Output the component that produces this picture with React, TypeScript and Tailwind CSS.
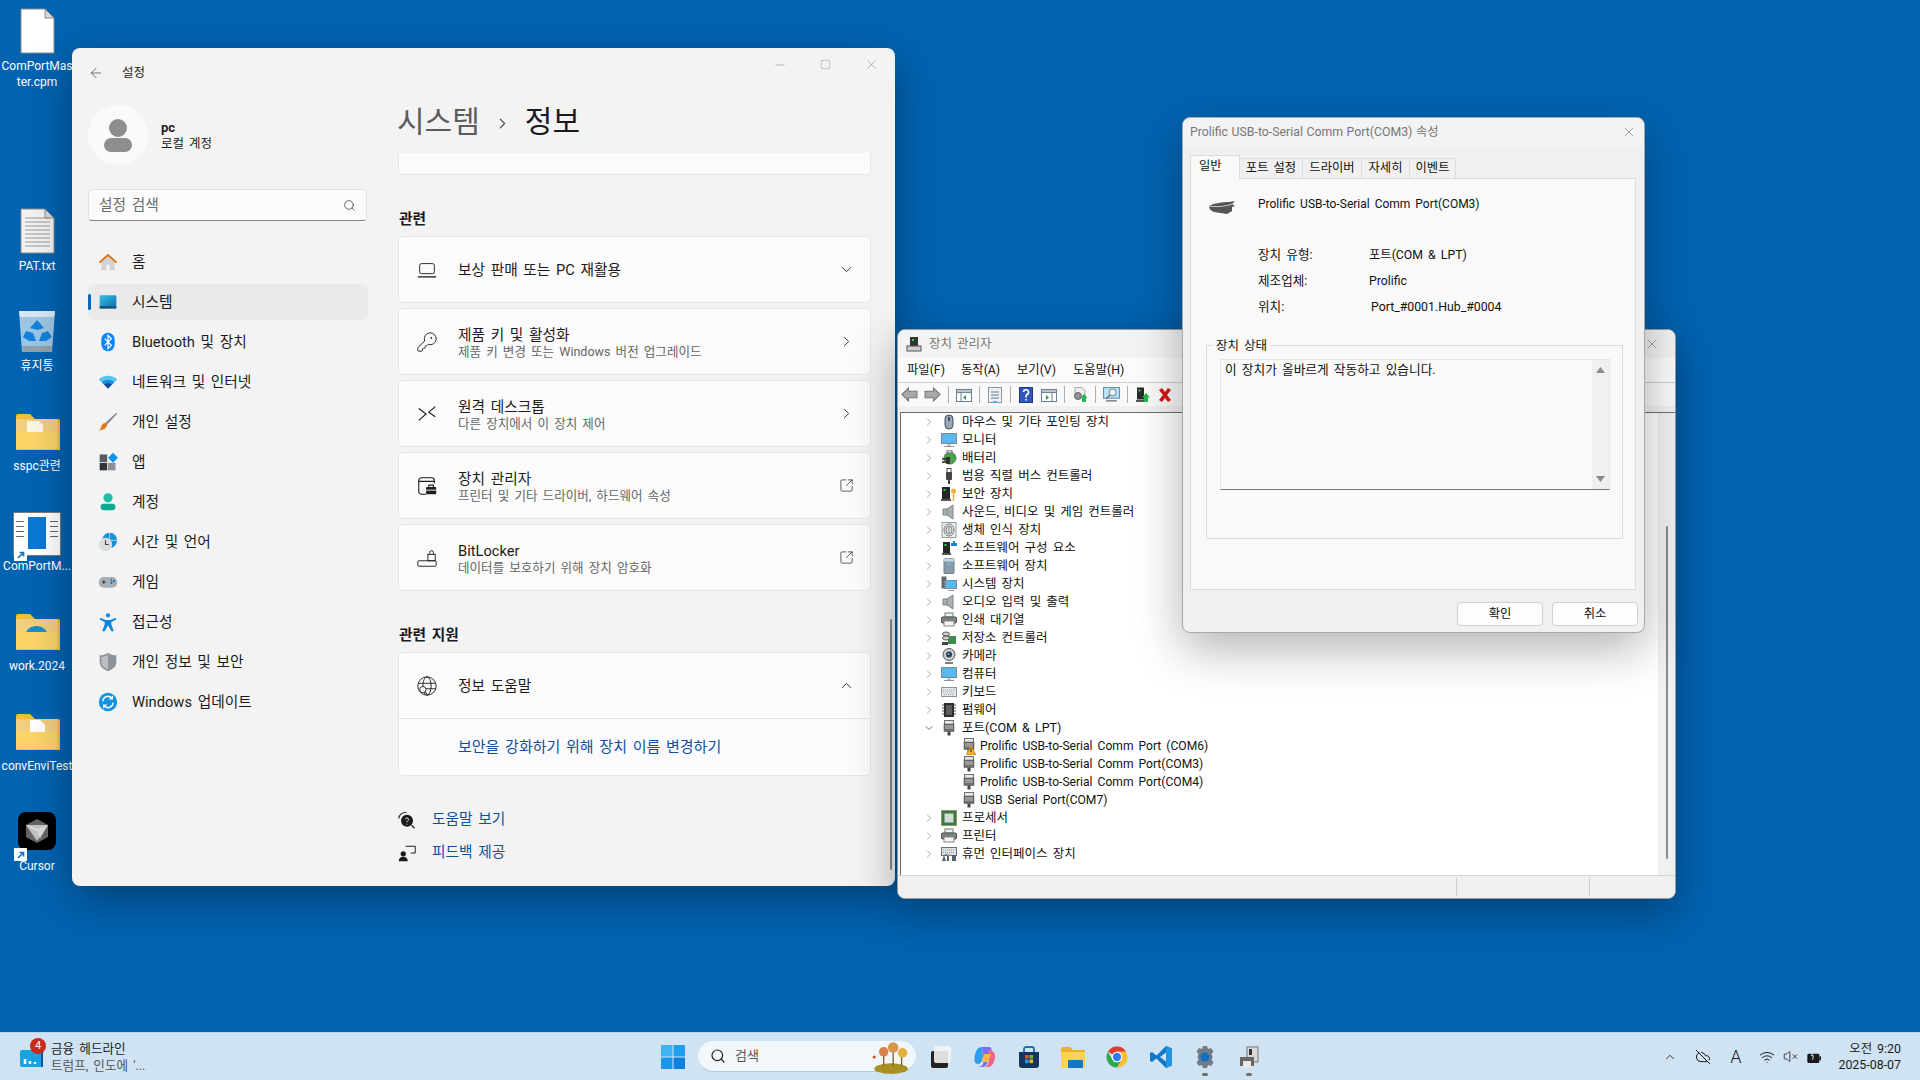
import { ReactNode } from 'react'
import { ChevronDown, ChevronRight, ChevronUp, ChevronUp as Caret, Search, SquareArrowOutUpRight, ArrowLeft, Minus, Square, X, KeyRound, Wifi, VolumeX, CloudOff } from 'lucide-react'

const FONT = "font-['Roboto','Noto_Sans_CJK_KR',sans-serif]"

function Ico({ size = 20, box = 24, children, className }: { size?: number; box?: number; children: ReactNode; className?: string }) {
	return (
		<svg width={size} height={size} viewBox={`0 0 ${box} ${box}`} className={`shrink-0 ${className ?? ''}`}>
			{children}
		</svg>
	)
}

// ---- desktop
function FileIcon({ lines }: { lines?: boolean }) {
	return (
		<Ico size={46} box={46}>
			<path d="M7 1h24l9 9v35H7z" fill={lines ? '#f2f2f2' : '#fff'} stroke="#8c8c8c" />
			<path d="M31 1v9h9z" fill="#d9d9d9" stroke="#8c8c8c" />
			{lines &&
				[10, 14, 18, 22, 26, 30, 34, 38].map((y) => <path key={y} d={`M11 ${y}h25`} stroke="#9a9a9a" />)}
		</Ico>
	)
}

function FolderIcon({ inner }: { inner?: ReactNode }) {
	return (
		<Ico size={46} box={46}>
			<path d="M2 8a2 2 0 0 1 2-2h12l5 5h23a2 2 0 0 1 2 2v29H2z" fill="#f5bd3c" />
			<rect x="2" y="11" width="42" height="22" fill="#f2cf7f" />
			{inner}
			<path d="M2 24h42v15a2 2 0 0 1-2 2H4a2 2 0 0 1-2-2z" fill="#fbd568" />
		</Ico>
	)
}

function RecycleIcon() {
	return (
		<Ico size={46} box={46}>
			<path d="M5 3h36l-3 41H8z" fill="#9cc6e4" />
			<path d="M5 3h36l-1 6H6z" fill="#d6e8f4" />
			<path d="M8 38h30l-.5 6h-29z" fill="#8fa3ae" />
			<path d="M23 12l7 8-7 2-7-2zM12 23l7 2 3 8h-7l-6-4zM34 23l4 6-6 4h-7l3-8z" fill="#1481dc" />
		</Ico>
	)
}

function AppDocIcon() {
	return (
		<div className="w-[48px] h-[44px] mt-[6px] bg-white border border-[#7a7a7a] flex justify-center gap-1 pt-1 relative">
			<div className="w-2 flex flex-col gap-1 pt-1">
				{[0, 1, 2, 3].map((i) => <div key={i} className="h-px bg-[#666]" />)}
			</div>
			<div className="w-[18px] h-[32px] bg-[#0a78d6]" />
			<div className="w-2 flex flex-col gap-1 pt-1">
				{[0, 1, 2, 3].map((i) => <div key={i} className="h-px bg-[#666]" />)}
			</div>
		</div>
	)
}

function Shortcut() {
	return (
		<div className="absolute left-[14px] bottom-[-5px] w-[13px] h-[13px] bg-white flex items-center justify-center">
			<Ico size={10} box={10}>
				<path d="M2 8l5-5M3.5 2.500h4v4" stroke="#1070c0" strokeWidth="1.600" fill="none" />
			</Ico>
		</div>
	)
}

function CursorIcon() {
	return (
		<div className="w-[38px] h-[38px] rounded-lg bg-black flex items-center justify-center">
			<Ico size={28} box={28}>
				<path d="M14 2l11 6v12l-11 6-11-6V8z" fill="#666" />
				<path d="M3 8l11 6 11-6-11 4z" fill="#ddd" />
				<path d="M14 14l11-6-8 14z" fill="#bbb" />
				<path d="M3 8h22l-11 16z" fill="#e6e6e6" opacity=".75" />
			</Ico>
		</div>
	)
}

const desktopItems: { label: ReactNode; icon: ReactNode; shortcut?: boolean }[] = [
	{ label: <>ComPortMas<br />ter.cpm</>, icon: <FileIcon /> },
	{ label: '', icon: null },
	{ label: 'PAT.txt', icon: <FileIcon lines /> },
	{ label: '휴지통', icon: <RecycleIcon /> },
	{ label: 'sspc관련', icon: <FolderIcon inner={<path d="M13 13h12l4 4v8H13z" fill="#fff" opacity=".8" />} /> },
	{ label: 'ComPortM...', icon: <AppDocIcon />, shortcut: true },
	{
		label: 'work.2024',
		icon: <FolderIcon inner={<path d="M11 27a12 12 0 0 1 22-3l-5 3a7 7 0 0 0-11 1z" fill="#1b8fc9" />} />
	},
	{ label: 'convEnviTest', icon: <FolderIcon inner={<path d="M16 12h10l5 5v9H16z" fill="#fff" />} /> },
	{ label: 'Cursor', icon: <CursorIcon />, shortcut: true }
]

function DesktopIcons() {
	return (
		<div className="absolute left-0 top-[6px] w-[74px] flex flex-col">
			{desktopItems.map((item, idx) => (
				<div key={idx} className="h-[100px] flex flex-col items-center text-white text-[12px] leading-[16px]">
					<div className="h-[50px] flex items-center justify-center relative w-full">
						{item.icon}
						{item.shortcut && <Shortcut />}
					</div>
					<div className="mt-[2px] text-center whitespace-nowrap">{item.label}</div>
				</div>
			))}
		</div>
	)
}

// ---- settings window
const navIcons: Record<string, ReactNode> = {
	home: (
		<Ico>
			<path d="M4 11l8-7 8 7v11H14v-7h-4v7H4z" fill="#d3d3d3" />
			<path d="M1 12L12 2l11 10-1.500 1.500L12 5 2.500 13.500z" fill="#e2700f" />
		</Ico>
	),
	system: (
		<Ico>
			<defs>
				<linearGradient id="sysg" x1="0" y1="0" x2="1" y2="1">
					<stop offset="0" stopColor="#35bedb" />
					<stop offset="1" stopColor="#0c6fb4" />
				</linearGradient>
			</defs>
			<rect x="2" y="4" width="20" height="15" rx="1" fill="url(#sysg)" />
			<rect x="2" y="17" width="20" height="3" fill="#1c4f74" />
		</Ico>
	),
	bluetooth: (
		<Ico>
			<rect x="4" y="1" width="16" height="22" rx="8" fill="#0a84ff" />
			<path d="M8 8l8 8-4 4V4l4 4-8 8" stroke="#fff" strokeWidth="1.500" fill="none" />
		</Ico>
	),
	network: (
		<Ico>
			<path d="M1 9a16 16 0 0 1 22 0l-3 3a12 12 0 0 0-16 0z" fill="#55c4f2" />
			<path d="M4 12a12 12 0 0 1 16 0l-3 3a8 8 0 0 0-10 0z" fill="#1590e0" />
			<path d="M7 15a8 8 0 0 1 10 0l-5 5z" fill="#0b4d92" />
		</Ico>
	),
	brush: (
		<Ico>
			<path d="M22 1l1 1L11 15l-2-2z" fill="#7f8a94" />
			<path d="M9 13l2 2c-1 5-5 7-10 7 2-1 2-3 3-5s3-4 5-4z" fill="#ea7a16" />
		</Ico>
	),
	apps: (
		<Ico>
			<rect x="2" y="3" width="9" height="9" fill="#555b61" />
			<rect x="2" y="13" width="9" height="9" fill="#2f3338" />
			<rect x="12" y="13" width="9" height="9" fill="#8b9096" />
			<path d="M18 1l6 6-6 6-6-6z" fill="#0f92e8" />
		</Ico>
	),
	account: (
		<Ico>
			<circle cx="12" cy="7" r="5.500" fill="#1ec0a8" />
			<rect x="3" y="14" width="18" height="8" rx="4" fill="#0fa992" />
		</Ico>
	),
	time: (
		<Ico>
			<circle cx="14" cy="10" r="9" fill="#1691dc" />
			<path d="M14 1v18M5 10h18" stroke="#bde4f8" />
			<circle cx="9" cy="15" r="8" fill="#d9dde0" />
			<path d="M9 10v5h4" stroke="#444" strokeWidth="1.300" fill="none" />
		</Ico>
	),
	game: (
		<Ico>
			<rect x="1" y="6" width="22" height="13" rx="6" fill="#a9afb4" />
			<path d="M5 12h4M7 10v4" stroke="#333" strokeWidth="1.300" />
			<circle cx="16" cy="13" r="1.300" fill="#1464b8" />
			<circle cx="19" cy="11" r="1.300" fill="#1464b8" />
			<circle cx="16" cy="9.500" r="1" fill="#1464b8" />
		</Ico>
	),
	access: (
		<Ico>
			<circle cx="12" cy="4" r="2.500" fill="#0f86d9" />
			<path d="M3 7l6 2.500h6L21 7l1 2-6 3v3l3 8h-3l-4-7-4 7H5l3-8v-3L2 9z" fill="#0f86d9" />
		</Ico>
	),
	shield: (
		<Ico>
			<path d="M12 1c3 2.500 6 3 10 3v8c0 6-5 9-10 11C7 21 2 18 2 12V4c4 0 7-.500 10-3z" fill="#8c949a" />
			<path d="M12 3v18C7 19 4 16 4 12V6c3 0 6-1 8-3z" fill="#b9bfc4" />
		</Ico>
	),
	update: (
		<Ico>
			<circle cx="12" cy="12" r="11" fill="#1393e0" />
			<path d="M6 11a6 6 0 0 1 11-3M18 13a6 6 0 0 1-11 3" stroke="#fff" strokeWidth="1.800" fill="none" />
			<path d="M18 4v5h-5zM6 20v-5h5z" fill="#fff" />
		</Ico>
	)
}

const navItems = [
	{ icon: 'home', label: '홈' },
	{ icon: 'system', label: '시스템', active: true },
	{ icon: 'bluetooth', label: 'Bluetooth 및 장치' },
	{ icon: 'network', label: '네트워크 및 인터넷' },
	{ icon: 'brush', label: '개인 설정' },
	{ icon: 'apps', label: '앱' },
	{ icon: 'account', label: '계정' },
	{ icon: 'time', label: '시간 및 언어' },
	{ icon: 'game', label: '게임' },
	{ icon: 'access', label: '접근성' },
	{ icon: 'shield', label: '개인 정보 및 보안' },
	{ icon: 'update', label: 'Windows 업데이트' }
]

const L = { stroke: '#1b1b1b', fill: 'none', strokeWidth: 1 } as const

const cardIcons: Record<string, ReactNode> = {
	laptop: (
		<Ico size={22}>
			<rect x="4" y="5" width="16" height="11" rx="2" {...L} />
			<path d="M2 19.500h20" {...L} strokeWidth={1.400} />
		</Ico>
	),
	key: <KeyRound size={22} strokeWidth={1} color="#1b1b1b" className="shrink-0" />,
	remote: (
		<Ico size={22}>
			<path d="M3 6l8 6-8 7M21 4l-7 6 7 5" {...L} strokeWidth={1.200} />
		</Ico>
	),
	devmgr: (
		<Ico size={22}>
			<path d="M11 21H6a3 3 0 0 1-3-3V6a3 3 0 0 1 3-3h11a3 3 0 0 1 3 3v3M3 7h17" {...L} strokeWidth={1.200} />
			<rect x="11" y="13" width="11" height="8" rx="1" fill="#1b1b1b" />
			<path d="M14 13v-2h5v2" {...L} strokeWidth={1.200} />
			<path d="M11 16.500h11" stroke="#fff" />
		</Ico>
	),
	lock: (
		<Ico size={22}>
			<rect x="2" y="15" width="20" height="6" rx="1" {...L} />
			<rect x="13" y="8" width="8" height="7" {...L} />
			<path d="M15 8V6a2 2 0 0 1 4 0v2" {...L} />
		</Ico>
	),
	globe: (
		<Ico size={22}>
			<circle cx="12" cy="12" r="10" {...L} />
			<ellipse cx="12" cy="12" rx="4.500" ry="10" {...L} />
			<path d="M2.500 9h19M8 15h14" {...L} />
			<circle cx="7.500" cy="16" r="3.500" fill="#fbfbfb" stroke="#1b1b1b" />
			<path d="M10 18.500l3 3" {...L} />
		</Ico>
	)
}

const cards = [
	{ icon: 'laptop', title: '보상 판매 또는 PC 재활용', arrow: 'down' },
	{ icon: 'key', title: '제품 키 및 활성화', sub: '제품 키 변경 또는 Windows 버전 업그레이드', arrow: 'right' },
	{ icon: 'remote', title: '원격 데스크톱', sub: '다른 장치에서 이 장치 제어', arrow: 'right' },
	{ icon: 'devmgr', title: '장치 관리자', sub: '프린터 및 기타 드라이버, 하드웨어 속성', arrow: 'out' },
	{ icon: 'lock', title: 'BitLocker', sub: '데이터를 보호하기 위해 장치 암호화', arrow: 'out' }
]

function CardArrow({ kind }: { kind: string }) {
	if (kind === 'down') return <ChevronDown size={17} strokeWidth={1.200} color="#1b1b1b" />
	if (kind === 'up') return <ChevronUp size={17} strokeWidth={1.200} color="#1b1b1b" />
	if (kind === 'right') return <ChevronRight size={17} strokeWidth={1.200} color="#1b1b1b" />
	return <SquareArrowOutUpRight size={15} strokeWidth={1.100} color="#1b1b1b" />
}

function SettingsRow({ icon, title, sub, arrow }: { icon: string; title: string; sub?: string; arrow: string }) {
	return (
		<div className="h-[65px] flex items-center pl-[17px] pr-[14px] shrink-0">
			<div className="w-[22px] h-[22px] flex items-center justify-center">{cardIcons[icon]}</div>
			<div className="ml-[20px] pt-[1px] flex-1 flex flex-col text-[14.7px] leading-[18px] text-[#1b1b1b]">
				<span>{title}</span>
				{sub && <span className="text-[12.550px] leading-[15px] text-[#666]">{sub}</span>}
			</div>
			<div className="w-[20px] flex justify-center"><CardArrow kind={arrow} /></div>
		</div>
	)
}

const cardCls = 'bg-[#fbfbfb] border border-[#e6e6e6] rounded-[5px]'

function SettingsWindow() {
	return (
		<div className="absolute left-[72px] top-[48px] w-[823px] h-[838px] rounded-lg bg-[#f3f3f3] shadow-[0_14px_44px_rgba(0,0,0,.34)] flex flex-col overflow-hidden text-[#1b1b1b]">
			<div className="h-[45px] flex items-center pt-[5px] shrink-0">
				<ArrowLeft size={16} strokeWidth={1} className="ml-[16px]" color="#333" />
				<span className="ml-[18px] text-[12.500px]">설정</span>
				<div className="ml-auto self-start pt-[4px] flex items-center">
					<Minus size={14} strokeWidth={1} color="#8a8a8a" />
					<Square size={11} strokeWidth={1} color="#8a8a8a" className="ml-[33px]" />
					<X size={15} strokeWidth={1} color="#8a8a8a" className="ml-[33px] mr-[16px]" />
				</div>
			</div>
			<div className="flex-1 flex">
				<div className="w-[326px] pl-[16px] pt-[12px] shrink-0">
					<div className="flex items-center">
						<div className="w-[60px] h-[60px] rounded-full bg-[#fafafa] flex flex-col items-center justify-center">
							<div className="w-[18px] h-[18px] rounded-full bg-[#8e8e8e]" />
							<div className="w-[28px] h-[14px] rounded-[7px] bg-[#8e8e8e] mt-[1px]" />
						</div>
						<div className="ml-[13px] flex flex-col text-[12.500px] leading-[16px] mt-[2px]">
							<span className="font-bold text-[13px]">pc</span>
							<span>로컬 계정</span>
						</div>
					</div>
					<div className="mt-[24px] w-[279px] h-[32px] bg-[#fbfbfb] border border-[#e2e2e2] border-b-[#868686] rounded-[4px] flex items-center pl-[10px] pr-[10px] text-[14.7px] text-[#6a6a6a]">
						<span>설정 검색</span>
						<Search size={13} strokeWidth={1.300} className="ml-auto" color="#333" />
					</div>
					<div className="mt-[23px] w-[280px] flex flex-col gap-[4px]">
						{navItems.map((item) => (
							<div
								key={item.label}
								className={`h-[36px] flex items-center rounded-[5px] relative pl-[10px] text-[14.7px] ${item.active ? 'bg-[#eaeaea]' : ''}`}
							>
								{item.active && <div className="absolute left-0 top-[10px] w-[3px] h-[16px] rounded-sm bg-[#0067c0]" />}
								{navIcons[item.icon]}
								<span className="ml-[14px] mt-[1px] leading-none">{item.label}</span>
							</div>
						))}
					</div>
				</div>
				<div className="flex-1 flex flex-col w-[473px] pr-[24px]">
					<div className="h-[60px] flex items-center pb-[2px] text-[30px] leading-none shrink-0">
						<span className="text-[#5c5c5c] ml-[-1px]">시스템</span>
						<ChevronRight size={17} strokeWidth={1.800} color="#5c5c5c" className="mx-[14px] mt-[2px]" />
						<span>정보</span>
					</div>
					<div className="h-[22px] shrink-0 bg-[#fbfbfb] border border-t-0 border-[#e6e6e6] rounded-b-[5px]" />
					<div className="pt-[34px] pb-[7px] text-[14.7px] font-semibold leading-[20px] pl-[1px]">관련</div>
					<div className="flex flex-col gap-[5px]">
						{cards.map((c) => (
							<div key={c.title} className={cardCls}>
								<SettingsRow {...c} />
							</div>
						))}
					</div>
					<div className="pt-[34px] pb-[7px] text-[14.7px] font-semibold leading-[20px] pl-[1px]">관련 지원</div>
					<div className={cardCls}>
						<SettingsRow icon="globe" title="정보 도움말" arrow="up" />
						<div className="border-t border-[#e6e6e6] h-[57px] flex items-center pl-[59px] text-[15px] text-[#0f4f9e]">
							보안을 강화하기 위해 장치 이름 변경하기
						</div>
					</div>
					<div className="mt-[27px] flex flex-col text-[14.7px] text-[#0f4f9e]">
						<div className="h-[33px] flex items-center">
							<Ico size={18}>
								<circle cx="12" cy="13" r="8" fill="#1b1b1b" />
								<path d="M1 10a9 9 0 0 1 10-8M18 19l4 4" stroke="#1b1b1b" strokeWidth="1.500" fill="none" />
								<path d="M10 11a2 2 0 1 1 3 2l-1 1v1M12 17v1" stroke="#fff" strokeWidth="1.300" fill="none" />
							</Ico>
							<span className="ml-[16px]">도움말 보기</span>
						</div>
						<div className="h-[33px] flex items-center">
							<Ico size={18}>
								<circle cx="7" cy="13" r="3.500" fill="#1b1b1b" />
								<path d="M1 23c0-4 2-6 6-6s6 2 6 6z" fill="#1b1b1b" />
								<path d="M10 3h13v9h-6" stroke="#1b1b1b" strokeWidth="1.300" fill="none" />
							</Ico>
							<span className="ml-[16px]">피드백 제공</span>
						</div>
					</div>
				</div>
			</div>
			<div className="absolute right-[3px] top-[571px] w-[2px] h-[251px] rounded-sm bg-[#8a8a8a]" />
		</div>
	)
}

// ---- device manager
const P = { fill: '#6e6e6e', stroke: '#444', strokeWidth: 0.500 } as const

const devIcons: Record<string, ReactNode> = {
	mouse: (
		<>
			<rect x="4" y="1" width="8" height="14" rx="4" fill="#9aa8b8" stroke="#3e4c5c" />
			<path d="M8 3v4" stroke="#2d3a48" strokeWidth="1.500" />
		</>
	),
	monitor: (
		<>
			<rect x="0.500" y="1.500" width="15" height="10" fill="#58b9ef" stroke="#7c8a96" />
			<path d="M6 13h4M3 14.500h10" stroke="#8b97a1" />
		</>
	),
	battery: (
		<>
			<circle cx="9" cy="8" r="6" fill="#46a54a" stroke="#5e7a5e" />
			<rect x="6" y="0" width="5" height="3" fill="#ccc" stroke="#777" />
			<path d="M1 9h5M1 12h5" stroke="#222" strokeWidth="1.500" />
			<rect x="5" y="7" width="4" height="7" fill="#333" />
		</>
	),
	usb: (
		<>
			<rect x="6" y="0.500" width="4" height="4" fill="#fff" stroke="#444" />
			<rect x="5" y="4" width="6" height="8" rx="1" fill="#444" />
			<rect x="7" y="12" width="2" height="4" fill="#444" />
		</>
	),
	security: (
		<>
			<rect x="1" y="1" width="8" height="12" fill="#262626" />
			<rect x="2.500" y="3" width="2" height="2" fill="#2fd24b" />
			<rect x="0" y="13" width="10" height="2" fill="#555" />
			<circle cx="12.500" cy="5" r="2.500" fill="#e4b23d" />
			<path d="M12.500 7v8" stroke="#e4b23d" strokeWidth="1.500" />
		</>
	),
	speaker: (
		<>
			<path d="M2 5h4l6-4v14l-6-4H2z" fill="#a9b0b3" stroke="#7c8488" />
			<path d="M6 5v6" stroke="#7c8488" />
		</>
	),
	finger: (
		<>
			<rect x="1" y="0.500" width="14" height="15" fill="#e9efe9" stroke="#8fa39a" />
			<ellipse cx="8" cy="8" rx="5" ry="6" fill="none" stroke="#777" />
			<ellipse cx="8" cy="8" rx="3" ry="4" fill="none" stroke="#777" />
			<path d="M8 5v6" stroke="#777" />
		</>
	),
	component: (
		<>
			<rect x="2" y="2" width="7" height="11" fill="#262626" />
			<rect x="3.500" y="4" width="2" height="2" fill="#2fd24b" />
			<rect x="1" y="13" width="9" height="2" fill="#555" />
			<path d="M10 3h2V1h2v2h2v3h-6z" fill="#1484d8" />
		</>
	),
	softdev: (
		<>
			<rect x="3" y="0.500" width="10" height="15" rx="1" fill="#8a9cac" stroke="#6b7c8b" />
			<rect x="3" y="0.500" width="10" height="3" fill="#c8d2da" />
			<rect x="7" y="5" width="2" height="2" fill="#32dde8" />
		</>
	),
	system: (
		<>
			<rect x="0.500" y="0.500" width="5" height="12" fill="#666" />
			<rect x="4" y="4.500" width="11.500" height="8" fill="#58b9ef" stroke="#7c8a96" />
			<path d="M7 14.500h6" stroke="#8b97a1" />
		</>
	),
	printer: (
		<>
			<rect x="4" y="1" width="8" height="4" fill="#f0f0f0" stroke="#777" />
			<rect x="0.500" y="5" width="15" height="6" rx="1" fill="#7b7f82" stroke="#555" />
			<rect x="3" y="9" width="10" height="5" fill="#f4f4f4" stroke="#888" />
			<rect x="12" y="6" width="2" height="1" fill="#35d050" />
		</>
	),
	storage: (
		<>
			<rect x="7" y="6" width="8" height="8" fill="#3b8c4a" />
			<ellipse cx="5" cy="4" rx="3.500" ry="2" fill="#d0d0d0" stroke="#555" />
			<ellipse cx="5" cy="8" rx="3.500" ry="2" fill="#d0d0d0" stroke="#555" />
			<path d="M1 12h6v3H1z" fill="#444" />
		</>
	),
	camera: (
		<>
			<circle cx="8" cy="6.500" r="6" fill="#c9ccce" stroke="#555" />
			<circle cx="8" cy="6.500" r="3" fill="#2a3e55" />
			<circle cx="7.500" cy="6" r="1" fill="#6fb5ef" />
			<path d="M4 15h8" stroke="#555" strokeWidth="1.500" />
		</>
	),
	keyboard: (
		<>
			<rect x="0.500" y="3.500" width="15" height="9" fill="#e4e7e9" stroke="#8c949a" />
			<path d="M2 6h12M2 8h12M3 10.500h10" stroke="#9aa2a8" strokeDasharray="1 1" />
		</>
	),
	firmware: (
		<>
			<rect x="3" y="1" width="10" height="14" fill="#2d2d2d" />
			<path d="M1 3h14M1 6h14M1 9h14M1 12h14" stroke="#555" strokeDasharray="2 10" />
			<rect x="5" y="3" width="6" height="10" fill="#5c5c5c" />
		</>
	),
	port: (
		<>
			<rect x="3.500" y="0.500" width="9" height="4" fill="#e8e8e8" stroke="#6e6e6e" />
			<rect x="3" y="4" width="10" height="7.500" {...P} />
			<path d="M4 6h8M4 8h8" stroke="#c0c0c0" />
			<rect x="6.500" y="11.500" width="3" height="4" fill="#444" />
		</>
	),
	cpu: (
		<>
			<rect x="0.500" y="0.500" width="15" height="15" fill="#3c7a46" stroke="#7c7430" strokeDasharray="1 1" />
			<rect x="3.500" y="3.500" width="9" height="9" fill="#d6dcd6" />
		</>
	),
	hid: (
		<>
			<rect x="0.500" y="1.500" width="15" height="8" fill="#dfe3e6" stroke="#6b7277" />
			<path d="M2 4h12M2 6.500h12" stroke="#8b9297" strokeDasharray="1 1" />
			<path d="M1 15l2-6 2 6zM6 15V9h2v6zM11 15V9h4v6z" fill="#54606b" />
			<rect x="4" y="8" width="2" height="2" fill="#2f7fdd" />
			<rect x="7" y="8" width="2" height="2" fill="#e39a2c" />
		</>
	)
}

const treeItems: { icon: string; label: string; open?: boolean; child?: boolean; warn?: boolean }[] = [
	{ icon: 'mouse', label: '마우스 및 기타 포인팅 장치' },
	{ icon: 'monitor', label: '모니터' },
	{ icon: 'battery', label: '배터리' },
	{ icon: 'usb', label: '범용 직렬 버스 컨트롤러' },
	{ icon: 'security', label: '보안 장치' },
	{ icon: 'speaker', label: '사운드, 비디오 및 게임 컨트롤러' },
	{ icon: 'finger', label: '생체 인식 장치' },
	{ icon: 'component', label: '소프트웨어 구성 요소' },
	{ icon: 'softdev', label: '소프트웨어 장치' },
	{ icon: 'system', label: '시스템 장치' },
	{ icon: 'speaker', label: '오디오 입력 및 출력' },
	{ icon: 'printer', label: '인쇄 대기열' },
	{ icon: 'storage', label: '저장소 컨트롤러' },
	{ icon: 'camera', label: '카메라' },
	{ icon: 'monitor', label: '컴퓨터' },
	{ icon: 'keyboard', label: '키보드' },
	{ icon: 'firmware', label: '펌웨어' },
	{ icon: 'port', label: '포트(COM & LPT)', open: true },
	{ icon: 'port', label: 'Prolific USB-to-Serial Comm Port (COM6)', child: true, warn: true },
	{ icon: 'port', label: 'Prolific USB-to-Serial Comm Port(COM3)', child: true },
	{ icon: 'port', label: 'Prolific USB-to-Serial Comm Port(COM4)', child: true },
	{ icon: 'port', label: 'USB Serial Port(COM7)', child: true },
	{ icon: 'cpu', label: '프로세서' },
	{ icon: 'printer', label: '프린터' },
	{ icon: 'hid', label: '휴먼 인터페이스 장치' }
]

function TreeRow({ icon, label, open, child, warn }: (typeof treeItems)[number]) {
	if (child) {
		return (
			<div className="h-[18px] flex items-center pl-[60px] text-[12.100px] leading-none text-[#111]">
				<div className="relative w-[16px] h-[16px]">
					<Ico size={16} box={16}>{devIcons[icon]}</Ico>
					{warn && (
						<Ico size={10} box={10} className="absolute left-[5px] top-[7px]">
							<path d="M5 0l5 10H0z" fill="#f0b429" stroke="#8a6a10" strokeWidth=".5" />
							<path d="M5 3v4" stroke="#222" />
						</Ico>
					)}
				</div>
				<span className="ml-[3px]">{label}</span>
			</div>
		)
	}
	return (
		<div className="h-[18px] flex items-center pl-[22px] text-[12.500px] leading-none text-[#111]">
			{open ? (
				<ChevronDown size={12} strokeWidth={1.500} color="#444" />
			) : (
				<ChevronRight size={12} strokeWidth={1.500} color="#888" />
			)}
			<Ico size={16} box={16} className="ml-[6px]">{devIcons[icon]}</Ico>
			<span className="ml-[5px]">{label}</span>
		</div>
	)
}

function ToolSep() {
	return <div className="w-px h-[17px] bg-[#b0b0b0] mx-[7px]" />
}

function Toolbar() {
	return (
		<div className="h-[23px] bg-[#f9f9f9] flex items-center pl-[3px] shrink-0">
			<Ico size={17} box={16}>
				<path d="M1 8l6-6v3h8v6H7v3z" fill="#a8a8a8" stroke="#777" />
			</Ico>
			<Ico size={17} box={16} className="ml-[6px]">
				<path d="M15 8L9 2v3H1v6h8v3z" fill="#a8a8a8" stroke="#777" />
			</Ico>
			<ToolSep />
			<Ico size={16} box={16}>
				<rect x="0.500" y="2.500" width="15" height="12" fill="#fff" stroke="#6e7f8e" />
				<rect x="0.500" y="2.500" width="15" height="3" fill="#b8c6d2" stroke="#6e7f8e" />
				<path d="M5 6v8" stroke="#6e7f8e" />
				<path d="M10 8l-3 2.500 3 2.500z" fill="#2f9d4c" />
			</Ico>
			<ToolSep />
			<Ico size={16} box={16}>
				<rect x="1.500" y="0.500" width="13" height="15" fill="#eef2f5" stroke="#8a979f" />
				<path d="M4 5h8M4 8h8M4 11h8" stroke="#607686" />
				<rect x="6" y="14" width="4" height="2" fill="#4fb3e8" />
			</Ico>
			<ToolSep />
			<Ico size={16} box={16}>
				<rect x="1.500" y="0.500" width="13" height="15" fill="#2f56b8" stroke="#1c3a88" />
				<path d="M5.500 5a2.500 2.500 0 1 1 3.500 2.500L8 9v1.500M8 12v1.500" stroke="#fff" strokeWidth="1.600" fill="none" />
			</Ico>
			<Ico size={16} box={16} className="ml-[7px]">
				<rect x="0.500" y="2.500" width="15" height="12" fill="#fff" stroke="#6e7f8e" />
				<rect x="0.500" y="2.500" width="15" height="3" fill="#b8c6d2" stroke="#6e7f8e" />
				<path d="M11 6v8" stroke="#6e7f8e" />
				<path d="M5 8l3 2.500L5 13z" fill="#2f9d4c" />
			</Ico>
			<ToolSep />
			<Ico size={16} box={16}>
				<path d="M3 0.500h7l3 3v7H3z" fill="#eee" stroke="#aaa" />
				<circle cx="6" cy="9" r="3.500" fill="#8c959b" stroke="#666" />
				<path d="M12 7l3.500 4H14v4h-4v-4H8.500z" fill="#25b54a" />
			</Ico>
			<ToolSep />
			<Ico size={17} box={16}>
				<rect x="0.500" y="1.500" width="15" height="10" fill="#bfe3f8" stroke="#5a90b5" />
				<circle cx="9" cy="6" r="3.200" fill="#eaf6fd" stroke="#7a8a94" />
				<path d="M6.500 8.500L3 12M3 14h10" stroke="#667" strokeWidth="1.200" />
			</Ico>
			<ToolSep />
			<Ico size={16} box={16}>
				<rect x="2" y="0.500" width="7" height="12" fill="#2a2a2a" />
				<rect x="3.500" y="2.500" width="2" height="2" fill="#2fd24b" />
				<rect x="1" y="13" width="9" height="2" fill="#555" />
				<path d="M11 6l4 4.500h-2V15H9v-4.500H7z" fill="#25b54a" />
			</Ico>
			<Ico size={16} box={16} className="ml-[6px]">
				<path d="M2 3l3-2 3 4 3-4 3 2-4 5 4 5-3 2-3-4-3 4-3-2 4-5z" fill="#d81414" />
			</Ico>
		</div>
	)
}

function DeviceManager() {
	return (
		<div className="absolute left-[897px] top-[329px] w-[779px] h-[570px] rounded-lg bg-[#f0f0f0] border border-[#9a9a9a] shadow-[0_14px_44px_rgba(0,0,0,.34)] flex flex-col overflow-hidden">
			<div className="h-[28px] flex items-center pl-[8px] pr-[15px] bg-[#f3f3f3] text-[12.500px] text-[#777] shrink-0">
				<Ico size={16} box={16}>
					<rect x="4" y="1" width="8" height="9" fill="#333" />
					<rect x="6" y="3" width="2" height="2" fill="#35d050" />
					<rect x="1" y="10" width="14" height="5" fill="#cfcfcf" stroke="#555" />
				</Ico>
				<span className="ml-[7px]">장치 관리자</span>
				<X size={16} strokeWidth={1} color="#777" className="ml-auto" />
			</div>
			<div className="h-[25px] bg-[#fbfbfb] border-b border-[#cfcfcf] flex items-center pl-[9px] text-[12.300px] text-[#111] shrink-0">
				<span className="w-[54px]">파일(F)</span>
				<span className="w-[56px]">동작(A)</span>
				<span className="w-[56px]">보기(V)</span>
				<span>도움말(H)</span>
			</div>
			<Toolbar />
			<div className="h-[6px] bg-[#f0f0f0] shrink-0" />
			<div className="flex-1 mx-[2px] mr-0 bg-white border-t border-l border-[#6e6e6e] flex min-h-0">
				<div className="flex-1">
					{treeItems.map((t) => (
						<TreeRow key={t.label} {...t} />
					))}
				</div>
				<div className="w-[17px] bg-[#f0f0f0] flex justify-center">
					<div className="w-[2px] h-[333px] mt-[113px] rounded-sm bg-[#8a8a8a]" />
				</div>
			</div>
			<div className="h-[23px] bg-[#f0f0f0] border-t border-[#d4d4d4] flex items-center justify-end shrink-0">
				<div className="w-[133px] h-[18px] border-l border-[#cfcfcf]" />
				<div className="w-[86px] h-[18px] border-l border-[#cfcfcf]" />
			</div>
		</div>
	)
}

// ---- properties dialog
const tabs = [
	{ label: '일반', w: 'w-[50px]', active: true },
	{ label: '포트 설정', w: 'w-[63px]' },
	{ label: '드라이버', w: 'w-[59px]' },
	{ label: '자세히', w: 'w-[48px]' },
	{ label: '이벤트', w: 'w-[46px]' }
]

const propRows = [
	{ k: '장치 유형:', v: '포트(COM & LPT)', cls: 'ml-[111px]' },
	{ k: '제조업체:', v: 'Prolific', cls: 'ml-[111px]' },
	{ k: '위치:', v: 'Port_#0001.Hub_#0004', cls: 'ml-[113px]' }
]

function PropsDialog() {
	return (
		<div className="absolute left-[1182px] top-[117px] w-[463px] h-[516px] rounded-lg bg-[#f0f0f0] border border-[#a8a8a8] shadow-[0_16px_48px_rgba(0,0,0,.3)] flex flex-col overflow-hidden text-[12.300px] text-[#111]">
			<div className="h-[28px] bg-[#f3f3f3] flex items-center pl-[7px] pr-[7px] text-[#777] shrink-0">
				<span className="[word-spacing:0.500px]">Prolific USB-to-Serial Comm Port(COM3) 속성</span>
				<X size={16} strokeWidth={1} color="#777" className="ml-auto" />
			</div>
			<div className="h-[32px] flex items-end pl-[7px] shrink-0">
				{tabs.map((t) => (
					<div
						key={t.label}
						className={`${t.w} flex items-center leading-none border border-[#dcdcdc] ${t.active ? 'h-[24px] justify-start pl-[8px] bg-[#f9f9f9] border-b-0 pb-[3px] relative top-px z-10' : 'h-[20px] justify-center pb-[1px] bg-[#f0f0f0] border-l-0 border-b-0'}`}
					>
						{t.label}
					</div>
				))}
			</div>
			<div className="ml-[7px] w-[446px] h-[412px] bg-[#f9f9f9] border border-[#dcdcdc] shrink-0">
				<div className="h-[63px] flex pl-[17px] pt-[16px]">
					<Ico size={28} box={28}>
						<path d="M1 11c5-3 14-4 20-4l6-1-3 3 3 2-3 1v4l-5 3-13-2c-3-1-5-3-5-6z" fill="#555" />
						<path d="M1 11c5 1 12 1 20-1l3-1" stroke="#c8c8c8" fill="none" />
					</Ico>
					<span className="ml-[22px] mt-[1px] leading-[16px] text-[12px]">Prolific USB-to-Serial Comm Port(COM3)</span>
				</div>
				<div className="pt-[0px]">
					{propRows.map((r) => (
						<div key={r.k} className="h-[26px] flex items-center pl-[67px]">
							<span className="w-[0px] whitespace-nowrap text-[12.600px]">{r.k}</span>
							<span className={r.cls}>{r.v}</span>
						</div>
					))}
				</div>
				<div className="mt-[25px] ml-[15px] w-[417px] h-[194px] border border-[#dcdcdc] relative pt-[13px] pl-[13px]">
					<span className="absolute left-[6px] top-[-8px] bg-[#f9f9f9] px-[3px] leading-[16px] text-[12.500px]">장치 상태</span>
					<div className="w-[390px] h-[131px] border border-[#e6e6e6] border-b-[#777] flex">
						<div className="flex-1 pl-[4px] pt-[2px] leading-[16px] text-[12.700px]">이 장치가 올바르게 작동하고 있습니다.</div>
						<div className="w-[17px] bg-[#f0f0f0] flex flex-col items-center justify-between py-[6px]">
							<Ico size={9} box={9}><path d="M0 7L4.500 1 9 7z" fill="#8a8a8a" /></Ico>
							<Ico size={9} box={9}><path d="M0 2l4.500 6L9 2z" fill="#8a8a8a" /></Ico>
						</div>
					</div>
				</div>
			</div>
			<div className="mt-[12px] flex justify-end gap-[9px] pr-[6px]">
				{['확인', '취소'].map((b) => (
					<div key={b} className="w-[86px] h-[24px] bg-[#fdfdfd] border border-[#d0d0d0] rounded-[4px] flex items-center justify-center">
						{b}
					</div>
				))}
			</div>
		</div>
	)
}

// ---- taskbar
function TaskIcon({ children, dot }: { children: ReactNode; dot?: boolean }) {
	return (
		<div className="w-[44px] h-[48px] flex items-center justify-center relative">
			{children}
			{dot && <div className="absolute bottom-[5px] w-[6px] h-[3px] rounded-full bg-[#6e6e6e]" />}
		</div>
	)
}

function Taskbar() {
	return (
		<div className="absolute left-0 bottom-0 w-full h-[48px] bg-[#cfe3f3] border-t border-[#b9d2e6] flex items-center text-[#1b1b1b]">
			<div className="w-[660px] flex items-center pl-[20px] shrink-0">
				<div className="relative w-[24px] h-[24px]">
					<Ico size={24} box={24}>
						<rect x="0" y="5" width="22" height="17" rx="2" fill="#18a3e0" />
						<path d="M5 19v-5M10 19v-3M15 19v-2" stroke="#fff" strokeWidth="2.500" />
						<path d="M22 6v16" stroke="#0a4f9c" strokeWidth="2" />
					</Ico>
					<div className="absolute left-[10px] top-[-7px] w-[16px] h-[16px] rounded-full bg-[#c42b1c] text-white text-[11px] leading-[16px] text-center">4</div>
				</div>
				<div className="ml-[7px] flex flex-col text-[12.600px] leading-[17px]">
					<span>금융 헤드라인</span>
					<span className="text-[#555]">트럼프, 인도에 '...</span>
				</div>
			</div>
			<Ico size={24} box={24} className="ml-[1px]">
				<path d="M0 0h11.500v11.500H0z" fill="#3db4f5" />
				<path d="M12.500 0H24v11.500H12.500z" fill="#1e9ff0" />
				<path d="M0 12.500h11.500V24H0z" fill="#1b96ea" />
				<path d="M12.500 12.500H24V24H12.500z" fill="#0f80dc" />
			</Ico>
			<div className="ml-[13px] w-[218px] h-[31px] rounded-full bg-[#f2f7fb] border-b border-[#b4c8d8] flex items-center pl-[12px] text-[13px] text-[#555] shrink-0">
				<Search size={16} strokeWidth={1.800} color="#222" />
				<span className="ml-[9px]">검색</span>
				<Ico size={40} box={38} className="ml-auto mr-[6px]">
					<ellipse cx="20" cy="31" rx="16" ry="5" fill="#a99024" />
					<path d="M13 28V18M22 28V14M30 28V19" stroke="#7a5a2a" strokeWidth="1.200" />
					<circle cx="13" cy="15" r="4.500" fill="#d9824a" />
					<circle cx="22" cy="11" r="5" fill="#d9964a" />
					<circle cx="31" cy="16" r="4.500" fill="#e3b13c" />
					<circle cx="4" cy="20" r="1.500" fill="#d9531a" />
				</Ico>
			</div>
			<div className="ml-[3px] flex items-center">
				<TaskIcon>
					<div className="relative w-[20px] h-[22px]">
						<div className="absolute left-0 bottom-0 w-[17px] h-[17px] rounded-[2px] bg-[#222]" />
						<div className="absolute right-0 top-0 w-[17px] h-[17px] rounded-[2px] bg-[#f2f2f2] opacity-90" />
					</div>
				</TaskIcon>
				<TaskIcon>
					<Ico size={24}>
						<path d="M9 2c-4 0-6 3-7 8-1 4-1 9 3 9 3 0 4-3 5-7z" fill="#2f9cf0" />
						<path d="M9 2h7c3 0 3 3 2 6l-3 8c-1 4-3 6-6 6H5c4 0 5-3 6-6z" fill="#7d6df0" />
						<path d="M15 5c5 0 8 3 7 8-1 6-4 9-7 9h-4c3 0 4-3 5-6z" fill="#f2668c" />
						<path d="M11 9h7l-3 8H9z" fill="#f6b64a" />
					</Ico>
				</TaskIcon>
				<TaskIcon>
					<Ico size={24}>
						<path d="M7 7V4a2 2 0 0 1 2-2h6a2 2 0 0 1 2 2v3" fill="none" stroke="#1a6fb5" strokeWidth="1.800" />
						<path d="M2 7h20v13a3 3 0 0 1-3 3H5a3 3 0 0 1-3-3z" fill="#14365e" />
						<rect x="8" y="10" width="3.600" height="3.600" fill="#e2502a" />
						<rect x="12.500" y="10" width="3.600" height="3.600" fill="#6fb92f" />
						<rect x="8" y="14.500" width="3.600" height="3.600" fill="#1f9de2" />
						<rect x="12.500" y="14.500" width="3.600" height="3.600" fill="#f3b51c" />
					</Ico>
				</TaskIcon>
				<TaskIcon>
					<Ico size={24}>
						<path d="M0 4a2 2 0 0 1 2-2h7l3 3h12v17H2a2 2 0 0 1-2-2z" fill="#eab02a" />
						<path d="M0 7h24v15a1 1 0 0 1-1 1H1a1 1 0 0 1-1-1z" fill="#fbd34e" />
						<rect x="7" y="15" width="15" height="8" rx="1" fill="#1378c4" />
					</Ico>
				</TaskIcon>
				<TaskIcon>
					<Ico size={24}>
						<path d="M12 1.500a10.500 10.500 0 0 1 9.100 5.250H12a5.250 5.250 0 0 0-4.550 2.630L2.900 6.750A10.500 10.500 0 0 1 12 1.500z" fill="#e33b2e" />
						<path d="M21.100 6.750A10.500 10.500 0 0 1 12 22.500l4.550-7.870A5.250 5.250 0 0 0 12 6.750z" fill="#fbc02d" />
						<path d="M2.900 6.750l4.550 7.880a5.250 5.250 0 0 0 9.100 0L12 22.500A10.500 10.500 0 0 1 2.900 6.750z" fill="#2da94f" />
						<circle cx="12" cy="12" r="5.200" fill="#fff" />
						<circle cx="12" cy="12" r="4.200" fill="#2f7ff0" />
					</Ico>
				</TaskIcon>
				<TaskIcon>
					<Ico size={24}>
						<path d="M17 1L7.500 10.500 3 7 1 8v8l2 1 4.500-3.500L17 23l6-2.500v-17z" fill="#0f78c8" />
						<path d="M17 7.500l-6 4.500 6 4.500z" fill="#cfe3f3" />
						<path d="M17 1l6 2.500v17L17 23z" fill="#2196e6" />
					</Ico>
				</TaskIcon>
				<TaskIcon dot>
					<Ico size={24}>
						<path d="M10 1h4l1 3 3-1 2.500 3.500L18.500 9l1 3-1 3 2 2.500L18 21l-3-1-1 3h-4l-1-3-3 1-2.500-3.500L5.500 15l-1-3 1-3-2-2.500L6 3l3 1z" fill="#6f7b86" />
						<circle cx="12" cy="12" r="4.500" fill="#0f6fc2" />
					</Ico>
				</TaskIcon>
				<TaskIcon dot>
					<Ico size={24}>
						<rect x="10" y="2" width="11" height="15" fill="#d8d8d8" stroke="#777" />
						<rect x="12" y="4" width="3" height="6" fill="#333" />
						<rect x="3" y="12" width="14" height="9" fill="#666" />
						<rect x="6" y="16" width="8" height="7" fill="#e8e8e8" />
					</Ico>
				</TaskIcon>
			</div>
			<div className="ml-auto flex items-center text-[#1b1b1b]">
				<Caret size={14} strokeWidth={1.500} />
				<CloudOff size={16} strokeWidth={1.500} className="ml-[18px]" />
				<span className="ml-[19px] text-[18px] leading-none font-light">A</span>
				<Wifi size={16} strokeWidth={1.500} className="ml-[18px]" />
				<VolumeX size={15} strokeWidth={1.300} className="ml-[8px]" />
				<Ico size={16} className="ml-[8px]">
					<rect x="2" y="7" width="18" height="14" rx="2" fill="#1b1b1b" />
					<rect x="20" y="11" width="2.500" height="6" fill="#1b1b1b" />
					<path d="M12 2l-4 8h3l-1 6" stroke="#cfe3f3" strokeWidth="1.500" fill="none" />
				</Ico>
				<div className="ml-[16px] mr-[19px] flex flex-col items-end text-[12.400px] leading-[16px]">
					<span>오전 9:20</span>
					<span>2025-08-07</span>
				</div>
			</div>
		</div>
	)
}

export default function App() {
	return (
		<div className={`relative w-[1920px] h-[1080px] overflow-hidden bg-[#0263b1] ${FONT} [word-spacing:2px]`}>
			<DesktopIcons />
			<SettingsWindow />
			<DeviceManager />
			<PropsDialog />
			<Taskbar />
		</div>
	)
}
